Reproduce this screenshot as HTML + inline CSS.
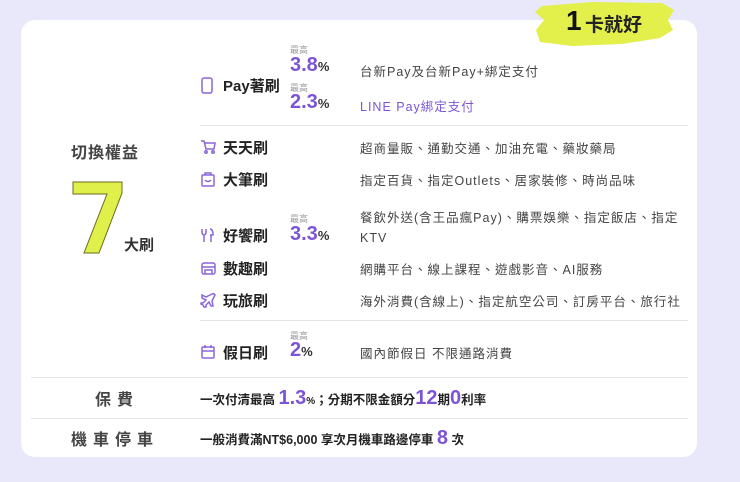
<!DOCTYPE html>
<html><head><meta charset="utf-8"><style>
*{margin:0;padding:0;box-sizing:border-box}
body{width:740px;height:482px;overflow:hidden;background:#e9e8fb;font-family:"Liberation Sans","Noto Sans CJK TC",sans-serif;position:relative;color:#333}
.card{position:absolute;left:21px;top:20px;width:676px;height:437px;background:#fff;border-radius:14px}
.a{position:absolute;white-space:nowrap}
.nm{font-size:15px;font-weight:bold;color:#222;left:223px}
.ds{font-size:12.5px;color:#444;left:360px;letter-spacing:1px}
.lb{font-size:9px;color:#999;left:290px}
.rt{left:290px;color:#7b55d6;font-weight:bold;font-size:20px}
.rt span{font-size:13px;color:#333;font-weight:bold}
.hr{position:absolute;height:1px;background:#e4e4e4}
.ic{position:absolute;left:200px}
</style></head><body>
<div class="card"></div>
<svg class="a" style="left:532px;top:0" width="145" height="50"><path d="M10 6 L60 2 L130 3 L142 10 L136 20 L141 30 L128 38 L90 44 L40 46 L8 42 L4 30 L12 20 L3 12 Z" fill="#e3ef4a"/></svg>
<div class="a" style="left:566px;top:5px;font-size:28px;font-weight:900;color:#111">1</div>
<div class="a" style="left:585px;top:10px;font-size:19px;font-weight:bold;color:#222">卡就好</div>

<div class="a" style="left:71px;top:139px;font-size:16px;font-weight:bold;color:#444;letter-spacing:1px">切換權益</div>
<svg class="a" style="left:70px;top:180px" width="56" height="76"><path d="M3 2 L52 2 L52 13 L29 73 L14 73 L37 14 L3 14 Z" fill="#def049" stroke="#6a6a20" stroke-width="1"/></svg>
<div class="a" style="left:124px;top:234px;font-size:15px;font-weight:bold;color:#333">大刷</div>

<svg class="ic" style="top:77px" width="14" height="18" fill="none" stroke="#8a66d9" stroke-width="1.5"><rect x="2" y="1" width="10" height="15" rx="2"/></svg>
<svg class="ic" style="top:139px" width="16" height="16" fill="none" stroke="#8a66d9" stroke-width="1.5"><path d="M1 2h3l2 8h8l1-6H5"/><circle cx="6" cy="13" r="1.2"/><circle cx="13" cy="13" r="1.2"/></svg>
<svg class="ic" style="top:171px" width="16" height="16" fill="none" stroke="#8a66d9" stroke-width="1.5"><rect x="2" y="4" width="12" height="11" rx="1"/><path d="M5 4V2h6v2M5 9q3 3 6 0"/></svg>
<svg class="ic" style="top:227px" width="16" height="16" fill="none" stroke="#8a66d9" stroke-width="1.5"><path d="M2 2v4q1 2 2 2t2-2V2M4 8v7M10 2q3 0 3 6h-3M11 8v7"/></svg>
<svg class="ic" style="top:260px" width="16" height="16" fill="none" stroke="#8a66d9" stroke-width="1.5"><rect x="2" y="3" width="13" height="11" rx="2"/><path d="M2 7h13M5 14v-4h7v4"/></svg>
<svg class="ic" style="top:292px" width="16" height="16" fill="none" stroke="#8a66d9" stroke-width="1.5"><path d="M2 3l4 2 6-3q2-1 3 1l-3 6 1 5-2 0-2-4-3 3v2H4l-1-2-2-1 0-1 2 0 3-3-4-2z"/></svg>
<svg class="ic" style="top:344px" width="16" height="16" fill="none" stroke="#8a66d9" stroke-width="1.5"><rect x="2" y="3" width="12" height="11" rx="1"/><path d="M2 7h12M5 1v3M11 1v3"/></svg>

<div class="a nm" style="top:75px">Pay著刷</div>
<div class="a lb" style="top:43px">最高</div>
<div class="a rt" style="top:54px">3.8<span>%</span></div>
<div class="a lb" style="top:81px">最高</div>
<div class="a rt" style="top:91px">2.3<span>%</span></div>
<div class="a ds" style="top:61px">台新Pay及台新Pay+綁定支付</div>
<div class="a ds" style="top:96px;color:#7b55d6">LINE Pay綁定支付</div>
<div class="hr" style="left:200px;top:125px;width:488px"></div>

<div class="a nm" style="top:137px">天天刷</div>
<div class="a ds" style="top:138px">超商量販、通勤交通、加油充電、藥妝藥局</div>
<div class="a nm" style="top:169px">大筆刷</div>
<div class="a ds" style="top:170px">指定百貨、指定Outlets、居家裝修、時尚品味</div>
<div class="a nm" style="top:225px">好饗刷</div>
<div class="a lb" style="top:212px">最高</div>
<div class="a rt" style="top:223px">3.3<span>%</span></div>
<div class="a ds" style="top:208px;line-height:20px">餐飲外送(含王品瘋Pay)、購票娛樂、指定飯店、指定<br>KTV</div>
<div class="a nm" style="top:258px">數趣刷</div>
<div class="a ds" style="top:259px">網購平台、線上課程、遊戲影音、AI服務</div>
<div class="a nm" style="top:290px">玩旅刷</div>
<div class="a ds" style="top:291px">海外消費(含線上)、指定航空公司、訂房平台、旅行社</div>
<div class="hr" style="left:200px;top:320px;width:488px"></div>

<div class="a nm" style="top:342px">假日刷</div>
<div class="a lb" style="top:329px">最高</div>
<div class="a rt" style="top:339px">2<span>%</span></div>
<div class="a ds" style="top:343px">國內節假日 不限通路消費</div>
<div class="hr" style="left:31px;top:377px;width:657px"></div>

<div class="a" style="left:95px;top:386px;font-size:16px;font-weight:bold;color:#444;letter-spacing:6px">保費</div>
<div class="a" style="left:200px;top:387px;font-size:12.5px;font-weight:bold;color:#222">一次付清最高 <span style="color:#7b55d6;font-size:20px">1.3</span><span style="font-size:10px">%</span>；分期不限金額分<span style="color:#7b55d6;font-size:20px">12</span>期<span style="color:#7b55d6;font-size:20px">0</span>利率</div>
<div class="hr" style="left:31px;top:418px;width:657px"></div>
<div class="a" style="left:71px;top:426px;font-size:16px;font-weight:bold;color:#444;letter-spacing:6px">機車停車</div>
<div class="a" style="left:200px;top:427px;font-size:12.5px;font-weight:bold;color:#222">一般消費滿NT$6,000 享次月機車路邊停車 <span style="color:#7b55d6;font-size:20px">8</span> 次</div>
</body></html>
